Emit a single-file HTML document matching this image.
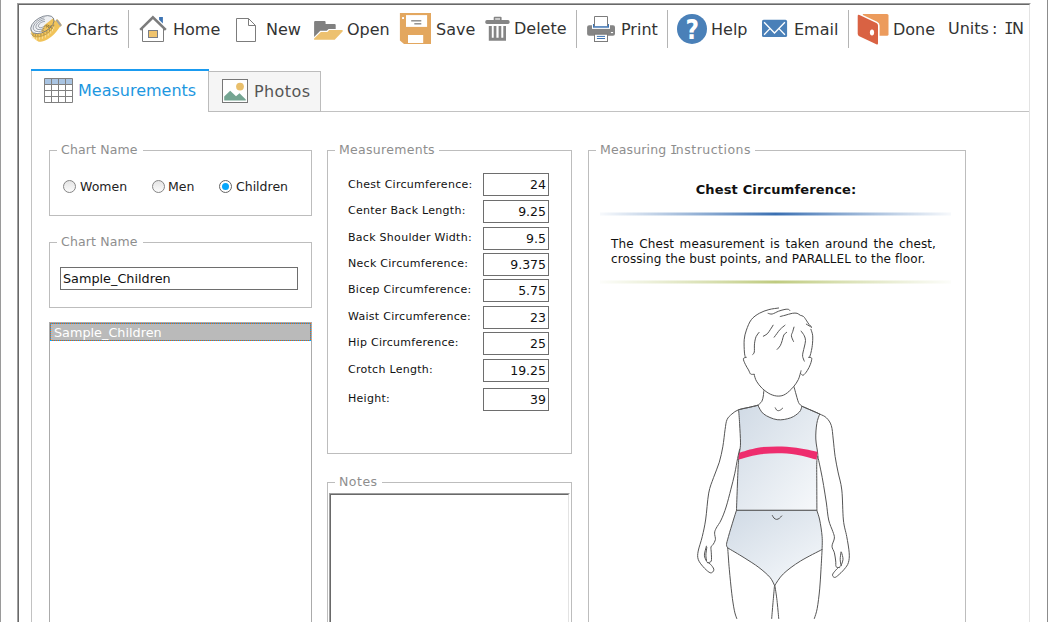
<!DOCTYPE html>
<html lang="en">
<head>
<meta charset="utf-8">
<title>Measurement Charts</title>
<style>
html,body{margin:0;padding:0;background:#fff;}
body{width:1048px;height:622px;overflow:hidden;position:relative;font-family:"DejaVu Sans","Liberation Sans",sans-serif;color:#333;}
.abs{position:absolute;}
.edgeL{left:0;top:0;width:1px;height:622px;background:#9a9a9a;}
.edgeR{left:1047px;top:0;width:1px;height:622px;background:#8c8c8c;}
.frameO{left:17px;top:3px;width:1012px;height:700px;border:1px solid #a0a0a0;border-right-color:#fff;border-bottom-color:#fff;}
.frameI{left:18px;top:4px;width:1010px;height:698px;border:1px solid #696969;border-right-color:#e3e3e3;border-bottom-color:#e3e3e3;}
.tb{font-size:16px;line-height:20px;white-space:nowrap;color:#333;}
.sep{width:1px;height:38px;top:10px;background:#b4b4b4;}
.leg{font-size:12.5px;line-height:16px;color:#8e8e8e;background:#fff;white-space:nowrap;padding:0 6px 0 4px;}
.fs{border:1px solid #bdbdbd;box-sizing:border-box;}
.lbl{font-size:12.5px;line-height:15px;white-space:nowrap;color:#222;}
.mlbl{font-size:11px;line-height:15px;letter-spacing:0.28px;white-space:nowrap;color:#111;left:348px;}
.mbox{left:483px;width:66px;height:23px;box-sizing:border-box;border:1px solid #6e6e6e;background:#fff;font-size:12.5px;line-height:21px;text-align:right;padding-right:2px;color:#111;}
.radio{width:13px;height:13px;box-sizing:border-box;border:1px solid #858585;border-radius:50%;background:linear-gradient(#e4e4e4,#fbfbfb);}
</style>
</head>
<body>
<div class="abs edgeL"></div>
<div class="abs edgeR"></div>
<div class="abs frameO"></div>
<div class="abs frameI"></div>

<!-- TOOLBAR -->
<div id="toolbar">
  <div class="abs tb" style="left:66px;top:20px">Charts</div>
  <div class="abs sep" style="left:128px"></div>
  <div class="abs tb" style="left:173px;top:20px">Home</div>
  <div class="abs tb" style="left:266px;top:20px">New</div>
  <div class="abs tb" style="left:347px;top:20px">Open</div>
  <div class="abs tb" style="left:436px;top:20px">Save</div>
  <div class="abs tb" style="left:514px;top:19px">Delete</div>
  <div class="abs sep" style="left:576px"></div>
  <div class="abs tb" style="left:621px;top:20px">Print</div>
  <div class="abs sep" style="left:667px"></div>
  <div class="abs tb" style="left:711px;top:20px">Help</div>
  <div class="abs tb" style="left:794px;top:20px">Email</div>
  <div class="abs sep" style="left:848px"></div>
  <div class="abs tb" style="left:893px;top:20px">Done</div>
  <div class="abs tb" style="left:948px;top:19px">Units<span style="margin-left:3px">:</span><span style="position:absolute;left:56px;top:0;font-family:'DejaVu Sans Mono','Liberation Mono',monospace">I</span><span style="position:absolute;left:64px;top:0">N</span></div>
</div>


<!-- TABS -->
<div class="abs" style="left:31px;top:69px;width:178px;height:2px;background:#1a9bf0"></div>
<div class="abs" style="left:31px;top:71px;width:1px;height:560px;background:#c2c2c2"></div>
<div class="abs" style="left:208px;top:111px;width:821px;height:1px;background:#c2c2c2"></div>
<div class="abs" style="left:208px;top:71px;width:113px;height:41px;box-sizing:border-box;border:1px solid #bcbcbc;background:#f5f5f5"></div>
<div class="abs tb" style="left:78px;top:81px;color:#1d97e0">Measurements</div>
<div class="abs tb" style="left:254px;top:82px;color:#555;letter-spacing:0.4px">Photos</div>

<!-- ICONS -->
<svg class="abs" style="left:26px;top:10px" width="40" height="40" viewBox="0 0 40 40">
  <defs>
    <clipPath id="tpc"><ellipse cx="16.4" cy="14.6" rx="12.8" ry="7.3" transform="rotate(-30 16.4 14.6)"/></clipPath>
  </defs>
  <path d="M4.8 19.5 C4.9 20.2 5.0 22.5 5.6 24.0 C6.2 25.5 7.2 27.4 8.3 28.6 C9.4 29.8 10.9 30.9 12.2 31.4 C13.5 31.9 14.7 31.6 16.0 31.4 C17.3 31.2 18.6 30.8 19.8 30.2 C21.1 29.6 22.3 28.8 23.5 28.0 C24.7 27.2 25.8 26.4 27.0 25.3 C28.2 24.2 29.4 22.9 30.5 21.6 C31.6 20.3 32.5 18.7 33.4 17.6 C34.3 16.5 36.1 16.5 35.7 15.1 C35.3 13.7 32.4 10.1 31.2 9.3 C30.0 8.6 30.5 11.0 28.6 10.6 C26.7 10.2 23.3 6.8 20.0 7.0 C16.7 7.2 11.5 9.9 9.0 12.0 C6.5 14.1 5.5 18.2 4.8 19.5 Z" fill="#f1c359"/>
  <path d="M31.2 9.3 L35.7 15.1 L34.3 16.5 L29.9 10.5 Z" fill="#9da0a6"/>
  <path d="M4.9 23.2 L5.2 24.0 L5.6 24.7 L6.2 25.4 L7.0 25.9 L7.9 26.4 L8.9 26.7 L10.0 26.8 L11.3 26.9 L12.5 26.8 L13.9 26.6 L15.3 26.3 L16.7 25.8 L18.1 25.2 L19.5 24.5 L20.8 23.8 L22.1 22.9 L23.3 22.0 L24.3 21.0 L25.3 19.9 L26.1 18.9 L26.8 17.8 L27.4 16.7 L27.8 15.6 L28.0 14.6" fill="none" stroke="#7c6b3c" stroke-width="0.5" stroke-opacity="0.8"/>
  <path d="M7.1 23.5 L7.1 25.5 M9.3 24.2 L9.3 26.2 M11.9 24.4 L11.9 26.4 M14.9 23.9 L14.9 25.9 M17.9 22.8 L17.9 24.8 M20.9 21.2 L20.9 23.2 M23.5 19.3 L23.5 21.3 M25.7 17.0 L25.7 19.0 M27.2 14.7 L27.2 16.7" fill="none" stroke="#6d5d33" stroke-width="0.6" stroke-opacity="0.85"/>
  <path d="M6.3 26.0 L6.3 28.4 M8.1 27.0 L8.1 29.4 M10.6 27.4 L10.6 29.8 M13.4 27.2 L13.4 29.6 M16.4 26.4 L16.4 28.8 M19.4 25.1 L19.4 27.5 M22.2 23.3 L22.2 25.7 M24.7 21.2 L24.7 23.6 M26.5 18.9 L26.5 21.3 M27.7 16.5 L27.7 18.9" fill="none" stroke="#fbe7b0" stroke-width="0.9" stroke-opacity="0.9"/>
  <ellipse cx="16.4" cy="14.6" rx="12.8" ry="7.3" transform="rotate(-30 16.4 14.6)" fill="#eef0f3"/>
  <g clip-path="url(#tpc)">
    <path d="M15 21.5 L18.5 15 L23 11.5 L27.5 8 L33 14 L30 22 L18 27 Z" fill="#f1c359"/>
    <path d="M9.3 22.4 L14.3 19.6 L16.2 23.4 L11.8 25.4 Z" fill="#fff"/>
    <path d="M19 16.5 L21 14.5 L20.6 17.3 L23 15 L22.6 18 L25.2 15.4 L24.8 18.4 M20.5 21 L22.8 19 L22.6 21.6 L25 19.4 L24.8 22 L27 19.6" fill="none" stroke="#6d5d33" stroke-width="0.55"/>
  </g>
  <path d="M17.7 20.3 L15.9 21.0 L14.2 21.4 L12.5 21.6 L11.0 21.5 L9.7 21.2 L8.6 20.6 L7.9 19.8 L7.4 18.8 L7.3 17.6 L7.5 16.3 L8.1 15.0 L9.0 13.6 L10.1 12.3 L11.5 11.1 L13.1 10.0 L14.7 9.0 L16.5 8.3 L18.3 7.8 M18.4 18.1 L17.1 18.8 L15.7 19.3 L14.3 19.6 L13.1 19.6 L12.0 19.4 L11.0 19.0 L10.4 18.4 L10.0 17.7 L9.9 16.8 L10.1 15.7 L10.5 14.7 L11.3 13.6 L12.3 12.6 L13.4 11.7 L14.7 10.9 L16.1 10.2 L17.5 9.8 L18.8 9.6 M19.4 15.4 L18.6 16.1 L17.6 16.7 L16.6 17.2 L15.6 17.5 L14.6 17.7 L13.8 17.6 L13.1 17.3 L12.6 16.8 L12.4 16.1 L12.5 15.4 L12.9 14.6 L13.4 13.8 L14.2 13.1 L15.2 12.5 L16.2 12.0 L17.2 11.7 L18.2 11.5 L19.0 11.6" fill="none" stroke="#5f6875" stroke-width="0.6"/>
  <ellipse cx="16.4" cy="14.6" rx="12.8" ry="7.3" transform="rotate(-30 16.4 14.6)" fill="none" stroke="#5f6875" stroke-width="0.7"/>
</svg>

<svg class="abs" style="left:134px;top:10px" width="40" height="40" viewBox="0 0 40 40">
  <polygon points="25.1,7.1 28.9,7.1 28.9,13.4 25.1,9.8" fill="#3d74b4"/>
  <path d="M8.5 18 V31.5 H29.5 V18" fill="none" stroke="#7c7c7c" stroke-width="1"/>
  <polyline points="6.2,19.9 18.9,7.3 31.8,19.9" fill="none" stroke="#7c7c7c" stroke-width="2.6" stroke-linejoin="miter"/>
  <rect x="14.5" y="20.5" width="9" height="7" fill="#f0c46e" stroke="#7b7e86" stroke-width="1"/>
</svg>
<svg class="abs" style="left:226px;top:10px" width="40" height="40" viewBox="0 0 40 40">
  <path d="M10.5 8.5 H22.5 L29.5 15.5 V31.5 H10.5 Z M22.5 8.5 V15.5 H29.5" fill="#fff" stroke="#7c7c7c" stroke-width="1" stroke-linejoin="miter"/>
</svg>
<svg class="abs" style="left:308px;top:10px" width="40" height="40" viewBox="0 0 40 40">
  <path d="M6.1 12.2 Q6.1 11.1 7.2 11.1 H16.6 Q17.6 11.1 17.6 12.2 V14 H26.6 Q27.7 14 27.7 15.1 V19 H20.6 L18.7 20.7 H12.3 L6.1 27 Z" fill="#808080"/>
  <path d="M6.1 29.7 H26.7 L35 20.9 L34.2 20.1 H21.2 L19.3 22 H12.9 L6.1 28.6 Z" fill="#edc16f"/>
</svg>
<svg class="abs" style="left:394px;top:8px" width="42" height="42" viewBox="0 0 42 42">
  <path d="M5.9 5.1 H37 V36.1 H10 L5.9 32.6 Z" fill="#e3a75f"/>
  <rect x="12" y="7.1" width="21.1" height="11.8" fill="#fff"/>
  <rect x="17.2" y="12.1" width="10.1" height="1.4" fill="#8a8a8a"/>
  <rect x="20.3" y="15.1" width="7" height="1.4" fill="#8a8a8a"/>
  <rect x="8.1" y="9.1" width="1.9" height="1.9" fill="#fff"/>
  <rect x="14" y="27" width="15.2" height="8" fill="#fff"/>
</svg>
<svg class="abs" style="left:478px;top:8px" width="42" height="42" viewBox="0 0 42 42">
  <rect x="15.7" y="8.8" width="7.9" height="4.5" rx="1" fill="#858585"/>
  <rect x="17.2" y="10.1" width="4.8" height="1.8" fill="#d2d2d2"/>
  <rect x="7.3" y="12" width="24.3" height="3.9" rx="1.6" fill="#858585"/>
  <path d="M10.8 17.9 H13.8 V29.7 H15.7 V17.9 H18.4 V29.7 H20.6 V17.9 H23.3 V29.7 H25.3 V17.9 H28 V32.7 H10.8 Z" fill="#858585"/>
</svg>
<svg class="abs" style="left:580px;top:8px" width="42" height="42" viewBox="0 0 42 42">
  <rect x="7.1" y="17.2" width="27.9" height="10.5" rx="2" fill="#858585"/>
  <rect x="12" y="16.5" width="18" height="4.4" fill="#fff"/>
  <rect x="13" y="16" width="16" height="3.7" fill="#3d74b4"/>
  <path d="M14.5 18.2 V8.5 H27.5 V18.2 Z" fill="#fff"/>
  <path d="M14.5 18.2 V8.5 H27.5 V18.2" fill="none" stroke="#7c7c7c" stroke-width="1"/>
  <rect x="14.5" y="26.2" width="13" height="7.3" fill="#fff" stroke="#7c7c7c" stroke-width="1"/>
  <rect x="16.9" y="27.9" width="8.1" height="1" fill="#3d74b4"/>
  <rect x="16.9" y="30" width="8.1" height="1" fill="#3d74b4"/>
  <rect x="30.9" y="24" width="2.2" height="1.1" fill="#fff"/>
</svg>
<svg class="abs" style="left:670px;top:8px" width="42" height="42" viewBox="0 0 42 42">
  <circle cx="22" cy="20.9" r="15" fill="#4a80b8"/>
  <text x="22.2" y="31.5" font-family="DejaVu Sans, Liberation Sans, sans-serif" font-weight="bold" font-size="26.5" fill="#fff" text-anchor="middle" transform="translate(22.2 0) scale(0.88 1) translate(-22.2 0)">?</text>
</svg>
<svg class="abs" style="left:754px;top:8px" width="42" height="42" viewBox="0 0 42 42">
  <rect x="8" y="11.8" width="25.1" height="17.2" rx="1.6" fill="#4a80b8"/>
  <path d="M10.1 14.2 L20.5 25 L30.9 14.2 M10.1 26.7 L15.9 20.6 M30.9 26.7 L25 20.6" fill="none" stroke="#fff" stroke-width="1.3"/>
</svg>
<svg class="abs" style="left:852px;top:8px" width="42" height="42" viewBox="0 0 42 42">
  <path d="M10.8 5.9 H35 Q36.5 5.9 36.5 7.4 V26.2 Q36.5 27.7 35 27.7 H10.8 Z" fill="#ec9b5c"/>
  <path d="M5.7 8.2 Q5.7 6.2 7.5 7.1 L24.4 15.1 Q26 15.9 26 17.6 V35.2 Q26 37.2 24.3 36.3 L7.3 28.2 Q5.7 27.4 5.7 25.8 Z" fill="#d96243" stroke="#fff" stroke-width="3.2" paint-order="stroke"/>
  <ellipse cx="20" cy="24.6" rx="2.1" ry="3" fill="#fff"/>
</svg>
<!-- tab icons -->
<svg class="abs" style="left:44px;top:78px" width="29" height="25" viewBox="0 0 29 25">
  <rect x="0.5" y="0.5" width="28" height="24" fill="#fff"/>
  <rect x="0.5" y="0.5" width="28" height="6" fill="#a9c4e2"/>
  <path d="M0.5 0.5 H28.5 V24.5 H0.5 Z M0.5 6.5 H28.5 M0.5 12.5 H28.5 M0.5 18.5 H28.5 M7.5 0.5 V24.5 M14.5 0.5 V24.5 M21.5 0.5 V24.5" fill="none" stroke="#808080" stroke-width="1"/>
</svg>
<svg class="abs" style="left:222px;top:79px" width="27" height="24" viewBox="0 0 27 24">
  <rect x="0.5" y="0.5" width="25" height="23" fill="#fff" stroke="#777" stroke-width="1"/>
  <circle cx="18" cy="7.6" r="3.9" fill="#e9bf6b"/>
  <path d="M2.2 21.5 V17.5 L8.2 11.8 L14 17.3 L17.5 14.2 L23.8 20.5 V21.5 Z" fill="#74a592"/>
</svg>

<!-- LEFT COLUMN -->
<div class="abs fs" style="left:49px;top:150px;width:263px;height:66px"></div>
<div class="abs leg" style="left:57px;top:142px;width:76px;letter-spacing:0.15px">Chart Name</div>
<div class="abs radio" style="left:63px;top:180px"></div>
<div class="abs lbl" style="left:80px;top:179px">Women</div>
<div class="abs radio" style="left:152px;top:180px"></div>
<div class="abs lbl" style="left:168px;top:179px">Men</div>
<div class="abs radio" style="left:219px;top:180px;background:#fff;border-color:#646464"><div style="position:absolute;left:2px;top:2px;width:7px;height:7px;border-radius:50%;background:#05a6fb"></div></div>
<div class="abs lbl" style="left:236px;top:179px">Children</div>

<div class="abs fs" style="left:49px;top:242px;width:263px;height:66px"></div>
<div class="abs leg" style="left:57px;top:234px;width:76px;letter-spacing:0.15px">Chart Name</div>
<div class="abs" style="left:60px;top:267px;width:238px;height:23px;box-sizing:border-box;border:1px solid #6e6e6e;font-size:12.8px;line-height:21px;padding-left:2px;color:#111">Sample_Children</div>

<div class="abs" style="left:49px;top:322px;width:263px;height:320px;box-sizing:border-box;border:1px solid #ababab"></div>
<div class="abs" style="left:50px;top:323px;width:261px;height:18px;background:#bababa"></div>
<div class="abs" style="left:50px;top:323px;width:261px;height:1px;background:repeating-linear-gradient(90deg,#ff5a00 0,#ff5a00 1px,#00a8ff 1px,#00a8ff 2px)"></div>
<div class="abs" style="left:50px;top:340px;width:261px;height:1px;background:repeating-linear-gradient(90deg,#ff5a00 0,#ff5a00 1px,#00a8ff 1px,#00a8ff 2px)"></div>
<div class="abs" style="left:50px;top:323px;width:1px;height:18px;background:repeating-linear-gradient(180deg,#ff5a00 0,#ff5a00 1px,#00a8ff 1px,#00a8ff 2px)"></div>
<div class="abs" style="left:310px;top:323px;width:1px;height:18px;background:repeating-linear-gradient(180deg,#ff5a00 0,#ff5a00 1px,#00a8ff 1px,#00a8ff 2px)"></div>
<div class="abs" style="left:54px;top:325px;color:#fff;font-size:12.8px;line-height:16px;white-space:nowrap">Sample_Children</div>

<!-- MEASUREMENTS -->
<div class="abs fs" style="left:327px;top:150px;width:245px;height:304px"></div>
<div class="abs leg" style="left:335px;top:142px;width:94px;letter-spacing:0.3px">Measurements</div>

<div class="abs mlbl" style="top:177px">Chest Circumference:</div>
<div class="abs mbox" style="top:173px">24</div>
<div class="abs mlbl" style="top:203px">Center Back Length:</div>
<div class="abs mbox" style="top:200px">9.25</div>
<div class="abs mlbl" style="top:230px">Back Shoulder Width:</div>
<div class="abs mbox" style="top:227px">9.5</div>
<div class="abs mlbl" style="top:256px">Neck Circumference:</div>
<div class="abs mbox" style="top:253px">9.375</div>
<div class="abs mlbl" style="top:282px">Bicep Circumference:</div>
<div class="abs mbox" style="top:279px">5.75</div>
<div class="abs mlbl" style="top:309px">Waist Circumference:</div>
<div class="abs mbox" style="top:306px">23</div>
<div class="abs mlbl" style="top:335px">Hip Circumference:</div>
<div class="abs mbox" style="top:332px">25</div>
<div class="abs mlbl" style="top:362px">Crotch Length:</div>
<div class="abs mbox" style="top:359px">19.25</div>
<div class="abs mlbl" style="top:391px">Height:</div>
<div class="abs mbox" style="top:388px">39</div>

<!-- NOTES -->
<div class="abs fs" style="left:327px;top:482px;width:245px;height:200px"></div>
<div class="abs leg" style="left:335px;top:474px;width:37px;letter-spacing:0.5px">Notes</div>
<div class="abs" style="left:329px;top:493px;width:241px;height:200px;box-sizing:border-box;border:1px solid #a0a0a0;border-right-color:#fff;border-bottom-color:#fff"></div>
<div class="abs" style="left:330px;top:494px;width:239px;height:198px;box-sizing:border-box;border:1px solid #696969;border-right-color:#e3e3e3;border-bottom-color:#e3e3e3"></div>

<!-- INSTRUCTIONS -->
<div class="abs fs" style="left:588px;top:150px;width:378px;height:520px"></div>
<div class="abs leg" style="left:596px;top:142px;width:149px"><span style="letter-spacing:0.15px">Measuring</span> <span style="letter-spacing:0.5px;margin-left:0.5px"><span style="font-family:'DejaVu Sans Mono','Liberation Mono',monospace;letter-spacing:-1.6px;margin-left:-1px">I</span>nstructions</span></div>
<div class="abs" style="left:588px;top:182px;width:376px;text-align:center;font-size:13px;line-height:16px;font-weight:bold;letter-spacing:0.15px;color:#111">Chest Circumference:</div>
<div class="abs" style="left:600px;top:212px;width:351px;height:4px;background:linear-gradient(180deg,rgba(61,116,180,.5) 0,rgba(61,116,180,.5) 25%,#3a6fb2 25%,#3a6fb2 75%,rgba(61,116,180,.5) 75%);-webkit-mask-image:linear-gradient(90deg,rgba(0,0,0,.04) 0,rgba(0,0,0,.3) 15%,rgba(0,0,0,.62) 32%,#000 50%,rgba(0,0,0,.62) 68%,rgba(0,0,0,.3) 85%,rgba(0,0,0,.04) 100%);mask-image:linear-gradient(90deg,rgba(0,0,0,.04) 0,rgba(0,0,0,.3) 15%,rgba(0,0,0,.62) 32%,#000 50%,rgba(0,0,0,.62) 68%,rgba(0,0,0,.3) 85%,rgba(0,0,0,.04) 100%)"></div>
<div class="abs" style="left:611px;top:237px;width:325px;font-size:12px;line-height:15px;letter-spacing:0.1px;color:#111;text-align:justify">The Chest measurement is taken around the chest, crossing the bust points, and PARALLEL to the floor.</div>
<div class="abs" style="left:600px;top:280px;width:351px;height:4px;background:linear-gradient(180deg,rgba(190,203,125,.5) 0,rgba(190,203,125,.5) 25%,#bfcb80 25%,#bfcb80 75%,rgba(190,203,125,.5) 75%);-webkit-mask-image:linear-gradient(90deg,rgba(0,0,0,.04) 0,rgba(0,0,0,.3) 15%,rgba(0,0,0,.62) 32%,#000 50%,rgba(0,0,0,.62) 68%,rgba(0,0,0,.3) 85%,rgba(0,0,0,.04) 100%);mask-image:linear-gradient(90deg,rgba(0,0,0,.04) 0,rgba(0,0,0,.3) 15%,rgba(0,0,0,.62) 32%,#000 50%,rgba(0,0,0,.62) 68%,rgba(0,0,0,.3) 85%,rgba(0,0,0,.04) 100%)"></div>

<!-- FIGURE -->
<svg class="abs" style="left:690px;top:300px" width="180" height="318.5" viewBox="690 300 180 318.5">
<defs><linearGradient id="tkg" x1="0" y1="0" x2="1" y2="1"><stop offset="0" stop-color="#d0dae5"/><stop offset="1" stop-color="#f7f9fb"/></linearGradient><linearGradient id="brg" x1="0" y1="0" x2="0.8" y2="1"><stop offset="0" stop-color="#d0dae5"/><stop offset="1" stop-color="#f4f7fa"/></linearGradient></defs>
<path d="M757.9 405.3 C758.9 406.8 760.5 411.6 763.7 414.0 C766.9 416.4 772.7 419.1 777.2 419.7 C781.7 420.3 787.0 419.1 790.7 417.8 C794.4 416.5 797.5 413.9 799.4 412.0 C801.3 410.1 801.5 407.2 801.9 406.2 C803.4 406.9 808.0 408.9 811.0 410.2 C814.0 411.5 818.2 413.4 819.7 414.0 C819.2 415.6 817.4 419.4 816.8 423.6 C816.1 427.8 815.6 433.9 815.8 439.0 C816.0 444.1 817.6 450.6 817.8 454.5 C818.0 458.4 817.0 457.1 816.8 462.2 C816.6 467.3 816.8 476.9 816.8 485.0 C816.8 493.1 816.9 506.3 816.9 510.6 L736.5 510.6 C736.6 506.3 737.1 493.1 737.4 485.0 C737.7 476.9 738.0 467.8 738.4 462.2 C738.8 456.6 739.2 454.8 739.6 451.6 C740.0 448.4 740.5 447.6 740.5 442.9 C740.5 438.2 739.9 429.1 739.6 423.6 C739.3 418.1 738.8 412.0 738.6 409.7 C740.2 409.4 744.8 408.3 748.0 407.6 C751.2 406.9 756.2 405.7 757.9 405.3 Z" fill="url(#tkg)" stroke="#555" stroke-width="1" stroke-linecap="round" stroke-linejoin="round"/>
<path d="M736.4 510.6 C735.9 512.2 734.7 515.7 733.4 520.0 C732.1 524.3 729.6 532.3 728.5 536.4 C727.4 540.5 726.6 542.7 726.5 544.6 C726.4 546.5 727.5 547.4 727.7 547.9 C730.4 549.5 738.9 554.4 744.1 557.7 C749.3 561.0 754.6 564.2 758.9 567.5 C763.2 570.8 767.4 574.4 770.0 577.4 C772.6 580.4 773.8 584.2 774.6 585.6 C776.1 583.6 779.1 577.9 783.4 573.8 C787.7 569.7 793.9 565.1 800.4 561.1 C806.9 557.1 818.5 551.4 822.1 549.5 C822.1 547.3 822.5 541.3 822.1 536.4 C821.7 531.5 820.6 524.3 819.7 520.0 C818.8 515.7 817.4 512.2 816.9 510.6 Z" fill="url(#brg)" stroke="#555" stroke-width="1" stroke-linecap="round" stroke-linejoin="round"/>
<path d="M738.8 452.8 C742.0 451.9 751.5 448.8 757.9 447.7 C764.3 446.6 770.8 446.4 777.2 446.4 C783.6 446.4 789.8 446.8 796.5 447.7 C803.2 448.6 814.1 451.1 817.6 451.8 L816.6 459.6 C813.2 458.8 803.1 455.8 796.5 454.7 C789.9 453.6 783.6 453.3 777.2 453.3 C770.8 453.3 764.4 453.6 757.9 454.7 C751.4 455.8 741.6 458.8 738.4 459.6 Z" fill="#ee2d6e"/>
<path d="M745.3 357.1 C745.1 356.2 744.6 354.9 744.4 352.0 C744.2 349.1 743.9 343.4 744.2 339.8 C744.5 336.2 745.2 333.5 746.4 330.1 C747.6 326.8 749.1 322.5 751.3 319.7 C753.4 316.9 756.4 315.0 759.3 313.3 C762.2 311.6 765.7 310.5 768.9 309.6 C772.1 308.7 777.0 308.3 778.6 308.0 M768.1 313.3 C768.8 313.4 770.5 314.4 772.2 314.0 C774.0 313.6 776.5 312.0 778.6 311.2 C780.7 310.4 783.3 309.7 785.0 309.4 C786.7 309.1 787.8 309.2 788.6 309.4 C789.4 309.6 789.5 310.2 789.7 310.4 M780.2 316.5 C781.0 316.3 783.0 315.8 785.0 315.3 C787.0 314.8 790.3 313.6 792.3 313.3 C794.3 313.0 795.8 313.0 797.1 313.3 C798.4 313.6 799.2 314.8 800.3 315.3 C801.4 315.8 802.4 315.6 803.5 316.5 C804.6 317.4 805.8 319.6 806.7 320.9 C807.6 322.2 808.3 323.5 809.1 324.5 C809.9 325.5 811.1 326.5 811.5 326.9 M806.3 324.1 C806.8 324.4 808.2 325.3 809.1 325.8 C810.0 326.3 811.1 327.1 811.5 327.3 M810.9 329.3 C811.2 330.4 812.5 333.1 812.7 335.8 C812.9 338.5 812.6 342.7 812.3 345.4 C812.0 348.1 811.5 350.1 811.1 352.0 C810.7 353.9 809.9 356.2 809.6 357.1 M801.1 331.1 C801.6 331.9 803.6 334.2 804.3 335.8 C805.0 337.4 805.5 338.7 805.5 340.6 C805.5 342.5 804.7 345.1 804.3 347.0 C803.9 348.9 803.4 350.4 803.1 352.0 C802.8 353.6 802.4 354.8 802.6 356.3 C802.8 357.8 804.0 360.3 804.3 361.1 M759.1 332.4 C758.6 333.1 756.9 334.7 756.1 336.6 C755.3 338.5 754.8 341.2 754.5 343.8 C754.2 346.4 754.6 350.2 754.3 352.0 C754.0 353.8 752.8 354.2 752.5 354.7 M773.1 325.2 C772.7 325.9 771.5 327.9 770.5 329.3 C769.5 330.7 768.5 332.7 767.3 333.8 C766.1 334.9 764.0 335.8 763.3 336.2 M785.0 325.2 C784.2 325.9 781.5 327.9 780.2 329.3 C778.9 330.7 778.0 332.1 777.0 333.4 C776.0 334.7 774.7 336.6 774.2 337.2 M786.6 332.4 C786.1 332.8 784.5 333.6 783.8 335.0 C783.1 336.4 782.8 338.8 782.2 340.6 C781.6 342.4 781.1 344.3 780.2 345.8 C779.4 347.3 777.6 348.8 777.1 349.4 M794.0 327.1 C793.8 327.9 793.1 330.2 792.7 331.7 C792.3 333.1 791.3 334.2 791.4 335.8 C791.5 337.4 793.1 340.5 793.5 341.4 M746.3 357.4 C745.8 357.6 743.6 357.5 743.4 358.7 C743.2 359.9 744.4 362.4 745.3 364.3 C746.1 366.2 747.6 368.3 748.5 369.9 C749.4 371.5 749.7 373.3 750.6 374.0 C751.5 374.7 753.5 374.2 754.1 374.3 M808.6 357.4 C809.1 357.5 811.4 357.0 811.7 358.2 C812.0 359.4 811.1 362.2 810.4 364.3 C809.6 366.4 808.4 368.9 807.2 370.7 C806.0 372.5 804.3 374.8 803.2 375.2 C802.1 375.6 800.9 373.5 800.4 373.2 M754.1 374.3 C754.5 375.4 755.1 378.9 756.5 381.2 C757.9 383.5 759.9 386.2 762.2 388.4 C764.5 390.5 767.5 392.8 770.2 394.1 C772.9 395.4 775.7 396.1 778.2 396.1 C780.8 396.1 783.0 395.7 785.5 394.1 C788.0 392.6 791.4 389.2 793.5 386.8 C795.6 384.4 797.1 381.9 798.3 379.6 C799.4 377.3 799.9 374.7 800.4 373.2 C800.9 371.7 800.9 371.2 801.0 370.8 M763.8 390.8 C763.7 391.7 763.6 394.2 763.3 396.0 C763.0 397.8 762.7 399.8 761.8 401.4 C760.9 402.9 758.5 404.6 757.9 405.3 M757.9 405.3 C756.2 405.7 751.2 406.9 748.0 407.6 C744.8 408.3 741.3 408.6 738.6 409.7 C735.9 410.8 733.8 412.3 731.9 414.0 C730.0 415.7 728.1 417.1 727.0 419.7 C725.9 422.3 725.8 424.9 725.1 429.4 C724.4 433.9 723.8 441.3 722.8 446.8 C721.8 452.3 720.8 457.1 719.3 462.2 C717.8 467.3 715.3 472.5 713.5 477.7 C711.7 482.9 710.0 486.1 708.7 493.1 C707.4 500.2 706.7 512.8 705.6 520.0 C704.5 527.2 703.5 531.2 702.3 536.4 C701.1 541.6 698.9 547.3 698.2 551.1 C697.5 554.9 697.4 556.7 698.2 559.3 C699.0 561.9 701.3 564.6 703.1 566.7 C704.9 568.8 707.4 571.1 708.9 572.1 C710.4 573.1 711.3 573.0 712.1 572.5 C712.9 572.0 714.1 570.6 713.8 569.2 C713.5 567.8 711.6 565.4 710.5 564.3 C709.4 563.1 707.8 562.6 707.2 562.3 M706.4 546.2 C706.1 547.7 704.4 552.7 704.4 555.2 C704.4 557.7 706.1 560.0 706.4 561.0 M706.8 547.5 C706.6 548.8 705.9 553.0 705.9 555.2 C705.9 557.5 706.5 560.0 706.6 561.0 M739.6 449.5 C739.3 451.0 738.4 454.3 737.6 458.4 C736.8 462.4 735.8 468.7 734.7 473.8 C733.6 478.9 732.3 483.7 730.9 489.2 C729.5 494.7 727.7 501.9 726.1 507.0 C724.5 512.1 722.8 516.5 721.1 520.0 C719.5 523.5 717.3 526.0 716.2 528.2 C715.1 530.4 714.7 531.2 714.6 533.1 C714.5 535.0 715.7 537.8 715.4 539.7 C715.1 541.6 713.7 543.4 713.0 544.6 C712.3 545.8 711.3 545.6 711.0 547.0 C710.7 548.4 711.2 550.5 711.3 552.8 C711.3 555.1 711.8 559.4 711.3 561.0 C710.8 562.6 708.5 562.3 708.0 562.6 M794.0 386.8 C794.3 387.8 794.9 390.1 795.6 392.7 C796.4 395.3 797.5 400.1 798.5 402.4 C799.5 404.6 801.3 405.6 801.9 406.2 M801.9 406.2 C803.4 406.9 808.0 408.9 811.0 410.2 C814.0 411.5 817.1 412.7 819.7 414.0 C822.3 415.3 824.5 415.9 826.4 417.8 C828.3 419.7 830.2 422.0 831.3 425.5 C832.4 429.0 832.6 433.9 833.2 439.0 C833.8 444.1 834.3 450.9 835.1 456.4 C835.9 461.9 836.9 466.3 838.0 471.9 C839.1 477.5 840.9 482.0 841.8 490.0 C842.7 498.0 842.6 512.3 843.4 520.0 C844.2 527.7 845.7 530.9 846.7 536.4 C847.7 541.9 848.9 548.4 849.2 552.8 C849.5 557.2 849.2 559.9 848.4 562.6 C847.6 565.3 846.1 567.0 844.3 569.2 C842.5 571.4 839.4 574.3 837.7 575.7 C836.1 577.1 835.3 577.5 834.4 577.4 C833.5 577.3 832.4 576.0 832.5 574.9 C832.6 573.8 834.2 572.0 835.2 570.8 C836.2 569.6 837.7 568.1 838.5 567.5 C839.3 566.9 839.8 567.0 840.0 566.9 M841.0 552.0 C840.9 553.2 840.2 557.0 840.2 559.3 C840.2 561.5 840.9 564.5 841.0 565.5 M841.6 552.6 C841.8 553.7 843.1 557.1 843.0 559.3 C842.9 561.5 841.3 564.8 841.0 565.9 M817.8 456.4 C818.3 458.6 819.7 465.1 820.7 469.9 C821.7 474.7 822.7 479.9 823.6 485.4 C824.5 490.9 825.5 497.2 826.4 503.0 C827.2 508.8 827.6 515.2 828.7 520.0 C829.8 524.8 831.8 528.5 832.8 531.5 C833.8 534.5 834.5 535.5 834.4 538.0 C834.3 540.5 832.0 543.7 832.0 546.2 C832.0 548.7 833.8 550.3 834.4 552.8 C835.0 555.3 835.4 558.7 835.7 561.0 C836.0 563.3 835.5 565.6 836.1 566.7 C836.7 567.8 838.8 567.4 839.3 567.5 M775.3 407.8 C775.5 408.1 776.0 409.4 776.5 409.9 C777.0 410.4 777.7 410.7 778.4 410.7 C779.1 410.7 779.9 410.3 780.6 409.9 C781.3 409.5 782.3 408.5 782.6 408.2 M772.4 515.5 C772.7 515.9 773.3 517.5 774.0 518.1 C774.7 518.8 775.7 519.4 776.6 519.4 C777.5 519.4 778.5 518.9 779.4 518.3 C780.2 517.7 781.3 516.3 781.7 515.9 M727.7 547.9 C728.0 551.5 728.6 561.6 729.3 569.2 C730.0 576.9 731.0 587.0 731.8 593.8 C732.6 600.6 733.5 606.1 734.3 610.2 C735.1 614.3 736.0 616.3 736.7 618.4 C737.4 620.5 738.0 622.2 738.3 623.0 M774.5 585.5 C774.3 588.0 773.7 594.9 773.2 600.4 C772.7 605.9 772.0 614.5 771.7 618.4 C771.4 622.3 771.4 623.1 771.3 624.0 M774.9 585.5 C775.2 588.0 776.4 594.9 777.0 600.4 C777.6 605.9 778.4 614.5 778.7 618.4 C779.1 622.3 779.0 623.1 779.1 624.0 M822.1 549.5 C821.9 552.8 821.4 562.6 821.0 569.2 C820.6 575.8 820.3 582.4 819.7 588.9 C819.1 595.4 818.1 603.6 817.2 608.5 C816.3 613.4 815.1 616.0 814.4 618.4 C813.7 620.8 813.2 622.2 813.0 623.0" stroke="#555" stroke-width="1" fill="none" stroke-linecap="round" stroke-linejoin="round"/>
</svg>
<!-- /FIGURE -->
</body>
</html>
